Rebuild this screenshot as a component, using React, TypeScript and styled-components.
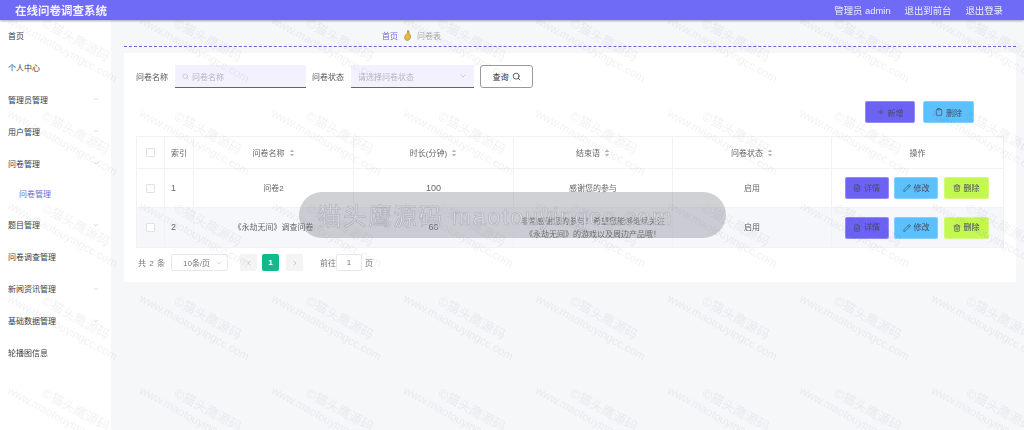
import React from "react";
import styled, { createGlobalStyle } from "styled-components";
import { Search, ChevronDown, ChevronLeft, ChevronRight, Plus, FileText, Trash2, Pencil, Clipboard } from "lucide-react";

const Global = createGlobalStyle`
  html, body { margin: 0; padding: 0; height: 100%; overflow: hidden; }
  body { font-family: "Liberation Sans", "Noto Sans CJK SC", sans-serif; background: #f6f7f9; }
  * { box-sizing: border-box; }
`;

const Page = styled.div`
  position: relative;
  width: 1024px;
  height: 430px;
  overflow: hidden;
  color: #555;
  font-size: 8px;
  filter: blur(0.35px);
`;
const Header = styled.header`
  position: relative;
  z-index: 5;
  height: 20px;
  background: #706bf6;
  box-shadow: 0 1px 2px rgba(60, 60, 80, 0.45);
  display: flex;
  align-items: center;
  justify-content: space-between;
  padding: 0 21px 0 15px;
  color: #fff;
`;
const Title = styled.div`
  font-size: 11.5px;
  font-weight: 700;
  color: #f2f2ff;
`;
const HeaderLinks = styled.nav`
  display: flex;
  gap: 14px;
  font-size: 9.4px;
  color: #eeeeff;
`;
const Body = styled.div`
  display: flex;
  height: 410px;
`;
const Side = styled.aside`
  width: 111px;
  flex: none;
  background: #fff;
`;
const SideList = styled.div`
  margin-top: -1px;
`;
const SideItem = styled.div<{ $sub?: boolean }>`
  height: ${p => (p.$sub ? 29 : 32.1)}px;
  display: flex;
  align-items: center;
  justify-content: space-between;
  padding: 0 11px 0 ${p => (p.$sub ? 19 : 8)}px;
  font-size: 8px;
  color: ${p => (p.$sub ? "#6e68d8" : "#3c3c44")};
  svg { color: #c9c9cf; }
`;
const Main = styled.main`
  flex: 1;
  padding: 0 9px 0 13px;
`;
const Crumbs = styled.div`
  height: 27px;
  display: flex;
  align-items: center;
  padding-left: 258px;
  gap: 6px;
  padding-top: 5px;
  border-bottom: 1px dashed #6c66d8;
  color: #a9a9b2;
`;
const CrumbLink = styled.span`
  color: #6e68d8;
`;
const Card = styled.section`
  margin-top: 6px;
  height: 229px;
  background: #fff;
  padding: 12px 12px 0;
`;
const Filter = styled.div`
  display: flex;
  align-items: center;
  height: 23px;
`;
const Label = styled.label`
  width: 39px;
  color: #555;
`;
const FieldBox = styled.div<{ $w: number }>`
  width: ${p => p.$w}px;
  height: 23px;
  background: #f3f1fe;
  border-bottom: 1px solid #666;
  display: flex;
  align-items: center;
  justify-content: space-between;
  padding: 0 7px;
  margin-right: 6px;
  color: #b5b5c4;
  svg { color: #b5b5c4; }
`;
const Hint = styled.span`
  display: flex;
  align-items: center;
  gap: 3px;
`;
const QueryButton = styled.button`
  width: 53px;
  height: 23px;
  background: #fff;
  border: 1px solid #999;
  border-radius: 3px;
  font: inherit;
  color: #333;
  display: flex;
  align-items: center;
  justify-content: center;
  gap: 3px;
  padding: 0;
`;
const Toolbar = styled.div`
  display: flex;
  justify-content: flex-end;
  gap: 8px;
  margin-top: 13px;
  padding-right: 30px;
`;
const Btn = styled.button<{ $bg: string; $w: number; $h?: number }>`
  width: ${p => p.$w}px;
  height: ${p => p.$h ?? 22}px;
  background: ${p => p.$bg};
  border: 1px solid rgba(255, 255, 255, 0.25);
  border-radius: 2px;
  font: inherit;
  color: #4a4a66;
  display: inline-flex;
  align-items: center;
  justify-content: center;
  gap: 3px;
  padding: 0;
`;
const Table = styled.table`
  width: 867px;
  margin-top: 13px;
  border-collapse: collapse;
  table-layout: fixed;
  border: 1px solid #f0f2f6;
`;
const Th = styled.th`
  height: 32px;
  font-weight: 400;
  color: #666;
  border: 1px solid #f0f2f6;
  padding: 0;
`;
const Td = styled.td<{ $num?: boolean }>`
  border: 1px solid #f0f2f6;
  text-align: center;
  padding: 0;
  line-height: 13px;
  color: #666;
  font-size: ${p => (p.$num ? 9 : 8)}px;
`;
const IndexCell = styled(Td)`
  text-align: left;
  padding-left: 6px;
`;
const Row = styled.tr<{ $h: number; $alt?: boolean }>`
  height: ${p => p.$h}px;
  background: ${p => (p.$alt ? "#f5f7fa" : "transparent")};
`;
const Check = styled.span`
  display: inline-block;
  width: 9px;
  height: 9px;
  background: #fff;
  border: 1px solid #e0e2e8;
  border-radius: 1px;
  vertical-align: middle;
`;
const Actions = styled.div`
  display: flex;
  justify-content: center;
  gap: 5.5px;
  padding-right: 2px;
`;
const Pager = styled.div`
  display: flex;
  align-items: center;
  height: 17px;
  margin-top: 6px;
  padding-left: 2px;
  color: #777;
`;
const Total = styled.span`
  width: 33px;
  letter-spacing: 0.5px;
`;
const SizeSelect = styled.div`
  width: 57px;
  height: 17px;
  border: 1px solid #e6e8ee;
  border-radius: 2px;
  display: flex;
  align-items: center;
  justify-content: space-between;
  padding: 0 4px 0 11px;
  margin-right: 12px;
  svg { color: #c0c4cc; }
`;
const PageBtn = styled.div<{ $active?: boolean; $gap: number }>`
  width: 17px;
  height: 17px;
  margin-right: ${p => p.$gap}px;
  border-radius: 2px;
  background: ${p => (p.$active ? "#13b98a" : "#f4f4f5")};
  color: ${p => (p.$active ? "#fff" : "#b5b8bf")};
  font-weight: 700;
  display: flex;
  align-items: center;
  justify-content: center;
`;
const Goto = styled.span`
  margin-left: 10px;
`;
const GotoBox = styled.div`
  width: 26px;
  height: 17px;
  border: 1px solid #e6e8ee;
  border-radius: 2px;
  margin: 0 3px 0 0;
  display: flex;
  align-items: center;
  justify-content: center;
`;
const Toast = styled.div`
  position: absolute;
  z-index: 3;
  left: 299px;
  top: 192px;
  width: 427px;
  height: 46px;
  border-radius: 23px;
  background: rgba(125, 128, 138, 0.36);
  display: flex;
  align-items: center;
  padding-left: 19px;
  font-size: 23.5px;
  white-space: nowrap;
  color: rgba(228, 229, 233, 0.5);
  -webkit-text-stroke: 0.5px rgba(160, 162, 170, 0.85);
  letter-spacing: 1.6px;
`;
const Marks = styled.div`
  position: absolute;
  z-index: 2;
  top: -3px;
  left: 0;
  right: 0;
  bottom: 0;
  display: grid;
  grid-template-columns: repeat(8, 132px);
  grid-auto-rows: 92.5px;
  pointer-events: none;
  overflow: hidden;
`;
const Mark = styled.div`
  display: flex;
  flex-direction: column;
  align-items: center;
  justify-content: center;
  transform: rotate(29deg);
  font-size: 11.5px;
  line-height: 15px;
  white-space: nowrap;
  color: rgba(60, 60, 70, 0.07);
`;
const MarkBrand = styled.span`
  padding-left: 14px;
  font-size: 13px;
`;

const Sort = () => (
  <svg width="6" height="8" viewBox="0 0 6 8" style={{ marginLeft: 4, verticalAlign: -1 }}>
    <path d="M3 .5 5.2 3H.8zM3 7.5.8 5h4.4z" fill="#b4b7bf" />
  </svg>
);
const Hand = () => (
  <svg width="7" height="11" viewBox="0 0 7 11">
    <path d="M3.6.6 5 .9 5.2 3.6C6.3 4.6 6.8 6 6.4 7.6 6 9.5 4.6 10.6 3 10.4 1.2 10.1.4 8.7.7 7 1 5.4 2.2 4 3.2 3.4z" fill="#e8b93c" stroke="#7d6420" strokeWidth=".5" />
  </svg>
);

const menu: { t: string; arrow?: boolean; sub?: boolean }[] = [
  { t: "首页" },
  { t: "个人中心" },
  { t: "管理员管理", arrow: true },
  { t: "用户管理", arrow: true },
  { t: "问卷管理", arrow: true },
  { t: "问卷管理", sub: true },
  { t: "题目管理", arrow: true },
  { t: "问卷调查管理" },
  { t: "新闻资讯管理", arrow: true },
  { t: "基础数据管理", arrow: true },
  { t: "轮播图信息" },
];

const rows = [
  { i: 1, name: "问卷2", time: "100", end: ["感谢您的参与"], h: 39 },
  { i: 2, name: "《永劫无间》调查问卷", time: "60", end: ["非常感谢您的参与！希望您能够继续关注", "《永劫无间》的游戏以及周边产品哦！"], h: 40, alt: true },
];
const cols = [28, 29, 160, 160, 159, 159, 172];

export default function App() {
  return (
    <Page>
      <Global />
      <Header>
        <Title>在线问卷调查系统</Title>
        <HeaderLinks>
          <span>管理员 admin</span>
          <span>退出到前台</span>
          <span>退出登录</span>
        </HeaderLinks>
      </Header>
      <Body>
        <Side>
          <SideList>
            {menu.map((m, i) => (
              <SideItem key={i} $sub={m.sub}>
                <span>{m.t}</span>
                {m.arrow && <ChevronDown size={8} />}
              </SideItem>
            ))}
          </SideList>
        </Side>
        <Main>
          <Crumbs>
            <CrumbLink>首页</CrumbLink>
            <Hand />
            <span>问卷表</span>
          </Crumbs>
          <Card>
            <Filter>
              <Label>问卷名称</Label>
              <FieldBox $w={131}>
                <Hint><Search size={7} />问卷名称</Hint>
              </FieldBox>
              <Label>问卷状态</Label>
              <FieldBox $w={123}>
                <Hint>请选择问卷状态</Hint>
                <ChevronDown size={8} />
              </FieldBox>
              <QueryButton>查询 <Search size={9} /></QueryButton>
            </Filter>
            <Toolbar>
              <Btn $bg="#6c63f5" $w={50}><Plus size={8} />新增</Btn>
              <Btn $bg="#5bc0fb" $w={51}><Clipboard size={8} />删除</Btn>
            </Toolbar>
            <Table>
              <colgroup>
                {cols.map((w, i) => <col key={i} width={w} />)}
              </colgroup>
              <thead>
                <tr>
                  <Th><Check /></Th>
                  <Th>索引</Th>
                  <Th>问卷名称<Sort /></Th>
                  <Th>时长(分钟)<Sort /></Th>
                  <Th>结束语<Sort /></Th>
                  <Th>问卷状态<Sort /></Th>
                  <Th>操作</Th>
                </tr>
              </thead>
              <tbody>
                {rows.map(r => (
                  <Row key={r.i} $h={r.h} $alt={r.alt}>
                    <Td><Check /></Td>
                    <IndexCell $num>{r.i}</IndexCell>
                    <Td>{r.name}</Td>
                    <Td $num>{r.time}</Td>
                    <Td>{r.end.map(l => <div key={l}>{l}</div>)}</Td>
                    <Td>启用</Td>
                    <Td>
                      <Actions>
                        <Btn $bg="#6c63f5" $w={44}><FileText size={8} />详情</Btn>
                        <Btn $bg="#5bc0fb" $w={44}><Pencil size={8} />修改</Btn>
                        <Btn $bg="#c4f74f" $w={45}><Trash2 size={8} />删除</Btn>
                      </Actions>
                    </Td>
                  </Row>
                ))}
              </tbody>
            </Table>
            <Pager>
              <Total>共 2 条</Total>
              <SizeSelect>10条/页<ChevronDown size={8} /></SizeSelect>
              <PageBtn $gap={5}><ChevronLeft size={8} /></PageBtn>
              <PageBtn $gap={7} $active>1</PageBtn>
              <PageBtn $gap={7}><ChevronRight size={8} /></PageBtn>
              <Goto>前往</Goto>
              <GotoBox>1</GotoBox>
              <span>页</span>
            </Pager>
          </Card>
        </Main>
      </Body>
      <Toast>猫头鹰源码 maotouyingcc.com</Toast>
      <Marks>
        {Array.from({ length: 48 }).map((_, i) => (
          <Mark key={i}>
            <MarkBrand>©猫头鹰源码</MarkBrand>
            <span>www.maotouyingcc.com</span>
          </Mark>
        ))}
      </Marks>
    </Page>
  );
}
